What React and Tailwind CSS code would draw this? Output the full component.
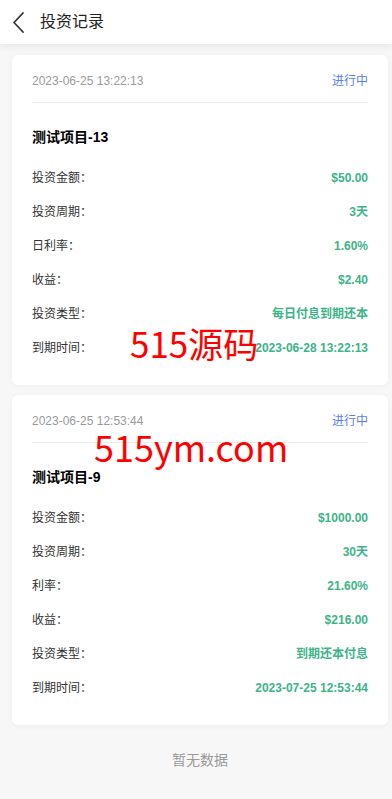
const records = [
  {
    created: '2023-06-25 13:22:13',
    status: '进行中',
    title: '测试项目-13',
    rows: [
      ['投资金额：', '$50.00'],
      ['投资周期：', '3天'],
      ['日利率：', '1.60%'],
      ['收益：', '$2.40'],
      ['投资类型：', '每日付息到期还本'],
      ['到期时间：', '2023-06-28 13:22:13'],
    ],
  },
  {
    created: '2023-06-25 12:53:44',
    status: '进行中',
    title: '测试项目-9',
    rows: [
      ['投资金额：', '$1000.00'],
      ['投资周期：', '30天'],
      ['利率：', '21.60%'],
      ['收益：', '$216.00'],
      ['投资类型：', '到期还本付息'],
      ['到期时间：', '2023-07-25 12:53:44'],
    ],
  },
];

const RecordCard = ({ rec }) => (
  <div className="bg-white rounded-md px-5 pb-5 shadow-[0_1px_6px_rgba(0,0,0,0.04)]">
    <div className="flex justify-between items-center pt-4 pb-[11px] leading-5 text-xs border-b border-[#ececec]">
      <span className="text-[#9a9a9a]">{rec.created}</span>
      <span className="text-[#5a7cf5]">{rec.status}</span>
    </div>
    <div className="mt-6 text-sm leading-5 font-bold text-black">{rec.title}</div>
    <div className="mt-[14px]">
      {rec.rows.map(([label, value]) => (
        <div key={label} className="h-[34px] flex items-center justify-between text-xs">
          <span className="text-[#333]">{label}</span>
          <span className="font-bold text-[#3db488]">{value}</span>
        </div>
      ))}
    </div>
  </div>
);

export default function App() {
  return (
    <div
      className="relative w-full h-[799px] overflow-hidden bg-[#f7f7f7]"
      style={{ fontFamily: '"Liberation Sans", "Noto Sans CJK SC", sans-serif' }}
    >
      <div className="h-11 bg-white flex items-center shadow-[0_2px_8px_rgba(0,0,0,0.08)] relative z-10">
        <svg width="36" height="44" viewBox="0 0 36 44" className="shrink-0">
          <path d="M23 13 L14 22.5 L23 32" fill="none" stroke="#333" strokeWidth="1.8" strokeLinecap="round" strokeLinejoin="round" />
        </svg>
        <span className="ml-1 text-base text-[#222]">投资记录</span>
      </div>

      <div className="pl-3 pr-1 pt-[11px]">
        <div className="flex flex-col gap-[10px]">
          {records.map((rec) => (
            <RecordCard key={rec.created} rec={rec} />
          ))}
        </div>
        <div className="mt-[25px] text-center text-sm leading-5 text-[#999]">暂无数据</div>
      </div>

      <div
        className="absolute left-[130px] top-[318px] text-[35px] leading-[50px] text-[#ff0000] z-20"
        style={{ fontFamily: '"Noto Sans CJK SC", sans-serif' }}
      >
        515源码
      </div>
      <div
        className="absolute left-[94px] top-[421px] text-[36px] leading-[50px] text-[#ff0000] z-20"
        style={{ fontFamily: '"Noto Sans CJK SC", sans-serif' }}
      >
        515ym.com
      </div>
    </div>
  );
}
